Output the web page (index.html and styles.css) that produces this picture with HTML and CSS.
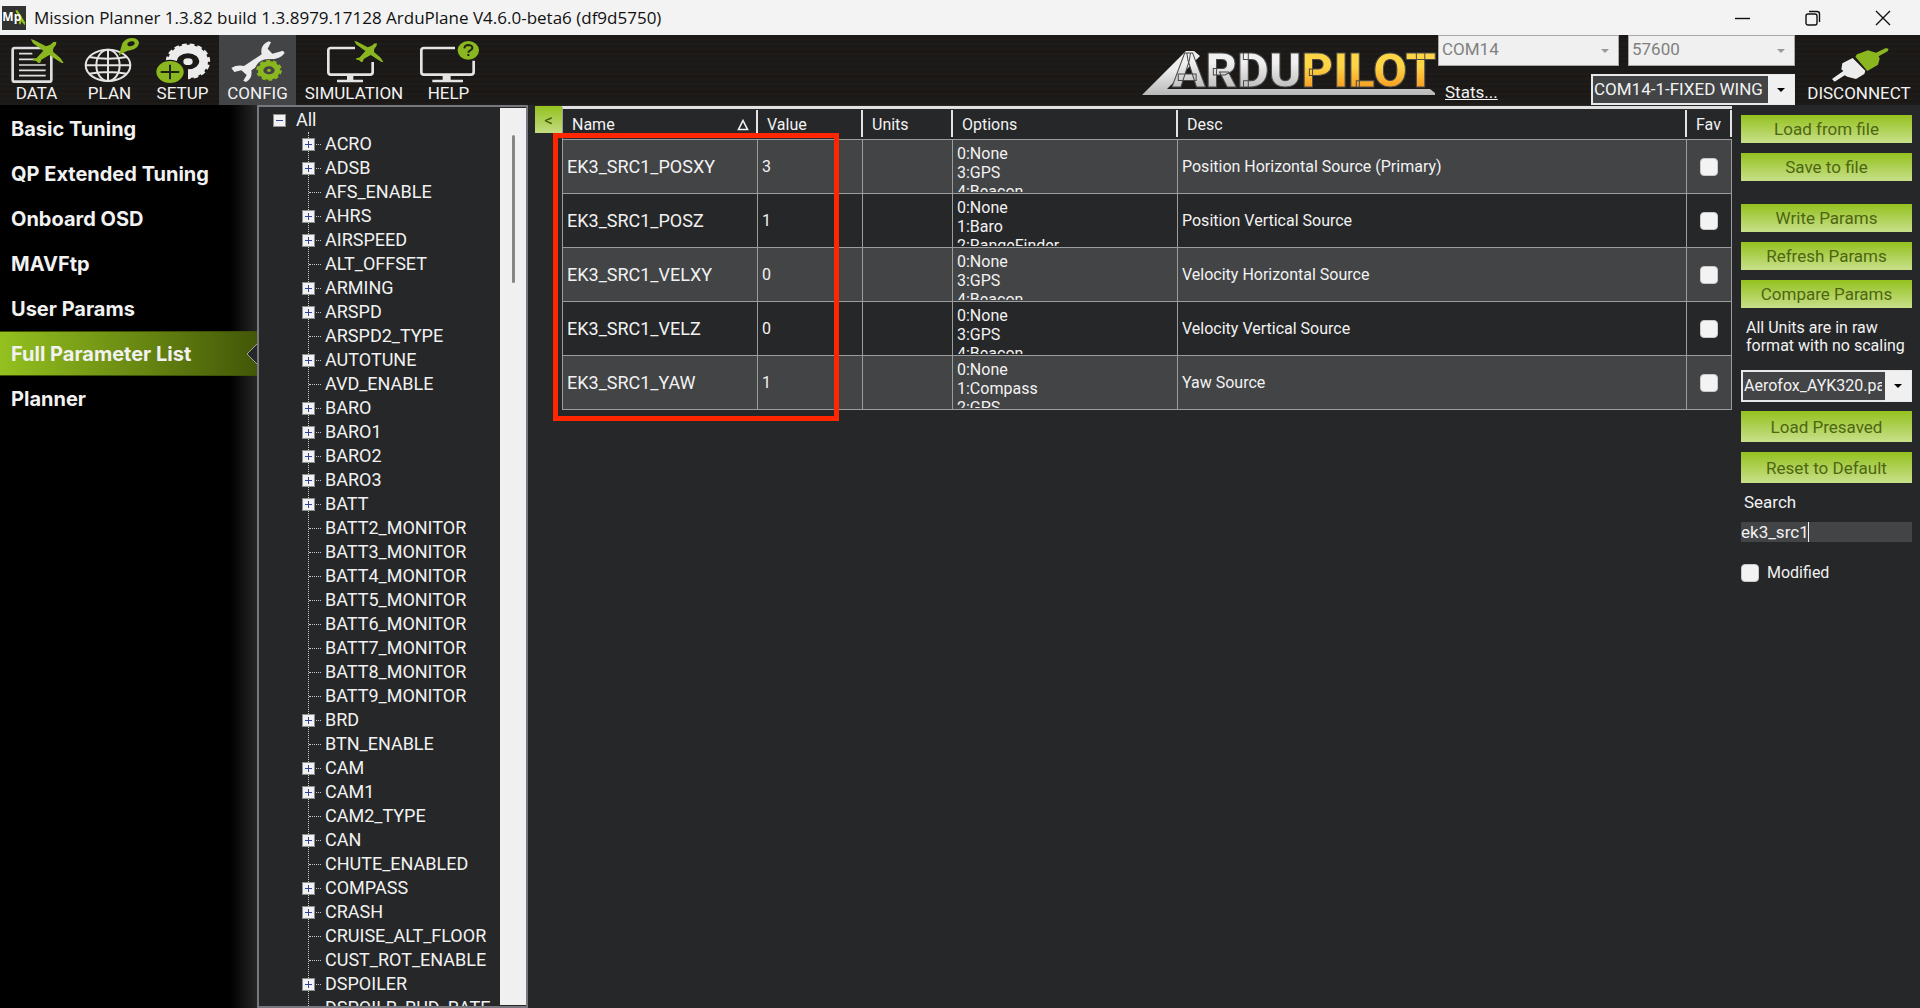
FILE: index.html
```html
<!DOCTYPE html>
<html lang="en">
<head>
<meta charset="utf-8">
<title>Mission Planner</title>
<link rel="stylesheet" href="styles.css">
</head>
<body>
<svg class="defs" aria-hidden="true">
  <defs>
    <symbol id="plane" viewBox="0 0 102 74">
      <path d="M2 0 L12 3 48 22 61 17 70 9 79 8 78 17 70 28 69 38 91 57 101 72 95 72 58 48 34 62 31 71 25 72 19 66 8 64 9 59 20 57 40 35 9 13Z"/>
    </symbol>
    <linearGradient id="silver" x1="0" y1="0" x2="0" y2="1">
      <stop offset="0.4" stop-color="#eeeeee"/><stop offset="1" stop-color="#b8b8b8"/>
    </linearGradient>
    <linearGradient id="gold" gradientUnits="userSpaceOnUse" x1="0" y1="16" x2="0" y2="54">
      <stop offset="0.4" stop-color="#fdd545"/><stop offset="1" stop-color="#f79a20"/>
    </linearGradient>
    <linearGradient id="steel" gradientUnits="userSpaceOnUse" x1="0" y1="16" x2="0" y2="54">
      <stop offset="0.3" stop-color="#f0f0f0"/><stop offset="1" stop-color="#bcbcbc"/>
    </linearGradient>
  </defs>
</svg>

<header class="titlebar">
  <svg class="app-icon" viewBox="0 0 72 72" aria-hidden="true">
    <rect width="72" height="72" fill="#30332f"/>
    <path d="M40 14 L46 12 70 50 68 58 58 46 56 56 50 52 54 40Z" fill="#8fc31f"/>
    <text x="1" y="46" class="app-icon-text">Mp</text>
  </svg>
  <h1 class="title">Mission Planner 1.3.82 build 1.3.8979.17128 ArduPlane V4.6.0-beta6 (df9d5750)</h1>
  <div class="window-buttons">
    <button type="button" aria-label="Minimize"><svg viewBox="0 0 16 16"><path d="M0 8.500H15"/></svg></button>
    <button type="button" aria-label="Restore"><svg viewBox="0 0 16 16"><rect x="1" y="4" width="11" height="11" rx="2"/><path d="M4 1.500H12Q14.500 1.500 14.500 4V12"/></svg></button>
    <button type="button" aria-label="Close"><svg viewBox="0 0 16 16"><path d="M1 1L15 15M15 1L1 15"/></svg></button>
  </div>
</header>

<div class="toolbar">
  <nav class="menu" aria-label="Main">
    <button type="button" class="tool">
      <svg viewBox="18 114 180 135"><rect x="35" y="144" width="116" height="101" rx="6" fill="none" stroke="#dedede" stroke-width="8"/>
        <path d="M54 161H94M54 178H100M54 195H134M54 211H134M54 227H134" stroke="#dedede" stroke-width="5"/>
        <use href="#plane" x="87" y="117" width="102" height="74" fill="#8ab71f"/></svg>
      <span>DATA</span></button>
    <button type="button" class="tool">
      <svg viewBox="237 114 180 135"><g fill="none" stroke="#e4e4e4" stroke-width="6"><ellipse cx="321" cy="196" rx="67" ry="47"/><ellipse cx="321" cy="196" rx="35" ry="47"/><path d="M321 149V243M254 196H388M264 171Q321 181 378 171M264 221Q321 211 378 221"/></g>
        <path fill="#8ab71f" fill-rule="evenodd" d="M353 167L364 130Q374 114 395 114Q414 116 414 130Q411 146 388 151Q373 153 353 167ZM391 124Q379 126 379 134Q381 140 391 138Q402 135 401 128Q398 123 391 124Z"/></svg>
      <span>PLAN</span></button>
    <button type="button" class="tool">
      <svg viewBox="459 114 180 135"><path d="M517 184A47 37 0 1 1 564 221" fill="none" stroke="#ececec" stroke-width="26"/>
        <path d="M502 184A62 49 0 1 1 564 233" fill="none" stroke="#ececec" stroke-width="9" stroke-dasharray="14 9"/>
        <ellipse cx="564" cy="185" rx="14" ry="10" fill="#ececec"/>
        <ellipse cx="510" cy="216" rx="45" ry="37" fill="#1b1917"/>
        <ellipse cx="510" cy="216" rx="41" ry="33" fill="#8ab71f"/><path d="M482 216H538M510 194V238" stroke="#1d2410" stroke-width="6"/></svg>
      <span>SETUP</span></button>
    <button type="button" class="tool selected">
      <svg viewBox="684 114 180 135"><path fill="#ececec" d="M694 204Q710 194 732 198L785 163Q779 135 806 124L813 127 803 146 817 161 849 152 854 159Q840 180 803 178L754 211Q758 236 738 246L730 242 740 225 724 211 703 216Z"/>
        <ellipse cx="807" cy="211" rx="42" ry="34" fill="#434446"/>
        <ellipse cx="807" cy="211" rx="25" ry="20" fill="none" stroke="#8ab71f" stroke-width="16"/><ellipse cx="807" cy="211" rx="35" ry="28" fill="none" stroke="#8ab71f" stroke-width="7" stroke-dasharray="11 9"/><ellipse cx="807" cy="211" rx="6" ry="5" fill="#8ab71f"/></svg>
      <span>CONFIG</span></button>
    <button type="button" class="tool tool-wide">
      <svg viewBox="327 114 180 135"><path d="M420 144H348Q340 144 340 151V217Q340 224 348 224H465Q473 224 473 217V186" fill="none" stroke="#e4e4e4" stroke-width="8"/><path d="M396 225H415V239H444V247H366V239H396Z" fill="#e4e4e4"/>
        <use href="#plane" x="416" y="117" width="90" height="76" fill="#8ab71f"/></svg>
      <span>SIMULATION</span></button>
    <button type="button" class="tool">
      <svg viewBox="610 114 180 135"><path d="M718 144H625Q617 144 617 151V217Q617 224 625 224H765Q774 224 774 217V182" fill="none" stroke="#e4e4e4" stroke-width="8"/><path d="M681 225H705V239H742V247H650V239H681Z" fill="#e4e4e4"/>
        <ellipse cx="758" cy="151" rx="32" ry="28" fill="#8ab71f"/><path d="M746 145Q747 135 759 135Q771 136 770 145Q769 149 764 151Q758 154 758 158M758 162V168" fill="none" stroke="#1d2410" stroke-width="6"/></svg>
      <span>HELP</span></button>
  </nav>
  <svg class="logo" viewBox="0 0 296 70" role="img" aria-label="ArduPilot">
    <path d="M2 60L46 16H54L60 21 27 54H290L295 58V60Z" fill="url(#silver)"/>
    <text x="32" y="52" class="logo-text"><tspan fill="url(#steel)">ARDU</tspan><tspan fill="url(#gold)">PILOT</tspan></text>
  </svg>
  <div class="connection">
    <div class="connection-row">
      <span class="combo combo-port"><select disabled aria-label="Port"><option>COM14</option></select><i></i></span>
      <span class="combo combo-baud"><select disabled aria-label="Baud rate"><option>57600</option></select><i></i></span>
    </div>
    <div class="connection-row">
      <a class="stats" href="#stats">Stats...</a>
      <span class="combo combo-dark combo-vehicle"><select aria-label="Vehicle"><option>COM14-1-FIXED WING</option></select><i></i></span>
    </div>
  </div>
  <button type="button" class="tool tool-connect">
    <svg viewBox="1197 114 180 135"><path fill="#ececec" d="M1206 237L1240 213 1234 208 1237 190 1268 174 1306 212 1303 222 1278 237 1252 230 1244 226 1214 245Z"/>
      <path fill="#8ab71f" d="M1276 170L1281 163 1314 151 1338 158 1368 144 1376 147 1373 154 1346 169 1349 176 1344 194 1312 213Z"/></svg>
    <span>DISCONNECT</span></button>
</div>

<div class="workspace">
  <nav class="sidebar" aria-label="Config pages">
    <a href="#basic">Basic Tuning</a>
    <a href="#qp">QP Extended Tuning</a>
    <a href="#osd">Onboard OSD</a>
    <a href="#mavftp">MAVFtp</a>
    <a href="#user">User Params</a>
    <a href="#full" class="current">Full Parameter List<svg class="notch" viewBox="0 0 11 20" aria-hidden="true"><path d="M11 0L1 10L11 20" fill="#262729" stroke="#a0a0a0"/></svg></a>
    <a href="#planner">Planner</a>
  </nav>

  <section class="tree-panel" aria-label="Parameter groups">
    <div class="tree">
      <div class="root"><button type="button" class="box minus" aria-label="Collapse"></button><span>All</span></div>
      <ul id="groups">
        <li class="group"><button type="button" class="box" aria-label="Expand"></button><span>ACRO</span></li>
        <li class="group"><button type="button" class="box" aria-label="Expand"></button><span>ADSB</span></li>
        <li><span>AFS_ENABLE</span></li>
        <li class="group"><button type="button" class="box" aria-label="Expand"></button><span>AHRS</span></li>
        <li class="group"><button type="button" class="box" aria-label="Expand"></button><span>AIRSPEED</span></li>
        <li><span>ALT_OFFSET</span></li>
        <li class="group"><button type="button" class="box" aria-label="Expand"></button><span>ARMING</span></li>
        <li class="group"><button type="button" class="box" aria-label="Expand"></button><span>ARSPD</span></li>
        <li><span>ARSPD2_TYPE</span></li>
        <li class="group"><button type="button" class="box" aria-label="Expand"></button><span>AUTOTUNE</span></li>
        <li><span>AVD_ENABLE</span></li>
        <li class="group"><button type="button" class="box" aria-label="Expand"></button><span>BARO</span></li>
        <li class="group"><button type="button" class="box" aria-label="Expand"></button><span>BARO1</span></li>
        <li class="group"><button type="button" class="box" aria-label="Expand"></button><span>BARO2</span></li>
        <li class="group"><button type="button" class="box" aria-label="Expand"></button><span>BARO3</span></li>
        <li class="group"><button type="button" class="box" aria-label="Expand"></button><span>BATT</span></li>
        <li><span>BATT2_MONITOR</span></li>
        <li><span>BATT3_MONITOR</span></li>
        <li><span>BATT4_MONITOR</span></li>
        <li><span>BATT5_MONITOR</span></li>
        <li><span>BATT6_MONITOR</span></li>
        <li><span>BATT7_MONITOR</span></li>
        <li><span>BATT8_MONITOR</span></li>
        <li><span>BATT9_MONITOR</span></li>
        <li class="group"><button type="button" class="box" aria-label="Expand"></button><span>BRD</span></li>
        <li><span>BTN_ENABLE</span></li>
        <li class="group"><button type="button" class="box" aria-label="Expand"></button><span>CAM</span></li>
        <li class="group"><button type="button" class="box" aria-label="Expand"></button><span>CAM1</span></li>
        <li><span>CAM2_TYPE</span></li>
        <li class="group"><button type="button" class="box" aria-label="Expand"></button><span>CAN</span></li>
        <li><span>CHUTE_ENABLED</span></li>
        <li class="group"><button type="button" class="box" aria-label="Expand"></button><span>COMPASS</span></li>
        <li class="group"><button type="button" class="box" aria-label="Expand"></button><span>CRASH</span></li>
        <li><span>CRUISE_ALT_FLOOR</span></li>
        <li><span>CUST_ROT_ENABLE</span></li>
        <li class="group"><button type="button" class="box" aria-label="Expand"></button><span>DSPOILER</span></li>
        <li><span>DSPOILR_RUD_RATE</span></li>
      </ul>
    </div>
    <div class="scrollbar"><div class="thumb"></div></div>
  </section>

  <main class="params">
    <button type="button" class="collapse">&lt;</button>
    <div class="grid-area">
      <table>
        <colgroup><col class="c-name"><col class="c-value"><col class="c-units"><col class="c-options"><col><col class="c-fav"></colgroup>
        <thead>
          <tr><th><div>Name<svg class="sort" viewBox="0 0 12 12" aria-label="ascending"><path d="M6 1.500L10.500 10.500H1.500Z"/></svg></div></th><th><div>Value</div></th><th><div>Units</div></th><th><div>Options</div></th><th><div>Desc</div></th><th><div>Fav</div></th></tr>
        </thead>
        <tbody>
          <tr><td class="name">EK3_SRC1_POSXY</td><td>3</td><td></td><td><div class="options">0:None<br>3:GPS<br>4:Beacon</div></td><td>Position Horizontal Source (Primary)</td><td><input type="checkbox" aria-label="Favourite EK3_SRC1_POSXY"></td></tr>
          <tr><td class="name">EK3_SRC1_POSZ</td><td>1</td><td></td><td><div class="options">0:None<br>1:Baro<br>2:RangeFinder</div></td><td>Position Vertical Source</td><td><input type="checkbox" aria-label="Favourite EK3_SRC1_POSZ"></td></tr>
          <tr><td class="name">EK3_SRC1_VELXY</td><td>0</td><td></td><td><div class="options">0:None<br>3:GPS<br>4:Beacon</div></td><td>Velocity Horizontal Source</td><td><input type="checkbox" aria-label="Favourite EK3_SRC1_VELXY"></td></tr>
          <tr><td class="name">EK3_SRC1_VELZ</td><td>0</td><td></td><td><div class="options">0:None<br>3:GPS<br>4:Beacon</div></td><td>Velocity Vertical Source</td><td><input type="checkbox" aria-label="Favourite EK3_SRC1_VELZ"></td></tr>
          <tr><td class="name">EK3_SRC1_YAW</td><td>1</td><td></td><td><div class="options">0:None<br>1:Compass<br>2:GPS</div></td><td>Yaw Source</td><td><input type="checkbox" aria-label="Favourite EK3_SRC1_YAW"></td></tr>
        </tbody>
      </table>
      <div class="highlight"></div>
    </div>
  </main>

  <aside class="actions">
    <div class="stack">
      <button type="button" class="green">Load from file</button>
      <button type="button" class="green">Save to file</button>
    </div>
    <div class="stack">
      <button type="button" class="green">Write Params</button>
      <button type="button" class="green">Refresh Params</button>
      <button type="button" class="green">Compare Params</button>
    </div>
    <p class="note">All Units are in raw<br>format with no scaling</p>
    <span class="combo combo-dark combo-preset"><select aria-label="Presaved parameters"><option>Aerofox_AYK320.param</option></select><i></i></span>
    <div class="stack presets">
      <button type="button" class="green tall">Load Presaved</button>
      <button type="button" class="green tall">Reset to Default</button>
    </div>
    <label class="search-label" for="search">Search</label>
    <div class="search"><input id="search" type="text" value="ek3_src1"><span class="caret"></span></div>
    <label class="modified"><input type="checkbox">Modified</label>
  </aside>
</div>
</body>
</html>
```
FILE: styles.css
```css
* { box-sizing: border-box; }

body {
  margin: 0;
  height: 100vh;
  display: flex;
  flex-direction: column;
  overflow: hidden;
  background: #262729;
  color: #f2f2f2;
  font: 17px/20px Roboto, "Liberation Sans", sans-serif;
}

button, select, input { font: inherit; color: inherit; margin: 0; }
button { padding: 0; border: 0; background: none; }
svg { display: block; }
.defs { position: absolute; width: 0; height: 0; }

/* Title bar */
.titlebar {
  flex: none;
  height: 35px;
  display: flex;
  align-items: center;
  background: #f3f3f3;
  color: #111;
}
.app-icon { width: 24px; height: 24px; margin: 0 8px 0 2px; }
.app-icon-text { font: bold 36px "Open Sans", sans-serif; fill: #fff; }
.title { margin: 0; flex: 1; font: 17px/24px "Open Sans", "Noto Sans", sans-serif; }
.window-buttons { display: flex; margin-right: 2px; }
.window-buttons button { width: 70px; height: 33px; display: grid; place-items: center; }
.window-buttons svg { width: 16px; height: 16px; fill: none; stroke: #111; stroke-width: 1.4; }

/* Toolbar */
.toolbar {
  flex: none;
  height: 70px;
  display: flex;
  background: repeating-linear-gradient(#1b1917 0 3px, #1e1b19 3px 5px);
}
.menu { display: flex; flex: 1; }
.tool {
  width: 73px;
  display: flex;
  flex-direction: column;
  align-items: center;
  padding-top: 3px;
}
.tool svg { width: 60px; height: 45px; }
.tool.selected { width: 77px; background: #434446; }
.tool-wide { width: 116px; }
.tool-connect { width: 122px; }
.logo { width: 296px; height: 70px; margin-right: 2px; }
.logo-text { font: 900 49px Roboto, sans-serif; stroke: #4a4a4a; stroke-width: 1; }
.connection {
  width: 357px;
  margin-right: 3px;
  display: flex;
  flex-direction: column;
  justify-content: space-between;
}
.connection-row { display: flex; justify-content: space-between; align-items: flex-end; }
.stats { color: #f2f2f2; margin: 0 0 3px 7px; }

.combo { display: grid; height: 31px; }
.combo select, .combo i { grid-area: 1 / 1; }
.combo select {
  appearance: none;
  width: 100%;
  min-width: 0;
  padding: 0 28px 3px 3px;
  border: 1px solid #a9a9a9;
  border-radius: 0;
  background: #f0f0f0;
  color: #808080;
  opacity: 1;
  overflow: hidden;
}
.combo i {
  justify-self: end;
  width: 26px;
  margin: 1px;
  display: grid;
  place-items: center;
  background: #f0f0f0;
  pointer-events: none;
}
.combo i::after {
  content: "";
  border: 4px solid transparent;
  border-top-color: #9a9a9a;
  border-bottom: 0;
}
.combo-dark select { background: #434446; color: #f2f2f2; border: 2px solid #e8e8e8; padding: 0 28px 1px 1px; }
.combo-dark i::after { border-top-color: #000; }
.combo-port { width: 181px; }
.combo-baud { width: 167px; }
.combo-vehicle { width: 204px; }

/* Workspace */
.workspace { flex: 1; min-height: 0; display: flex; }

.sidebar {
  flex: none;
  width: 257px;
  padding-top: 1px;
  background: linear-gradient(90deg, #000 230px, #262626);
}
.sidebar a {
  display: flex;
  align-items: center;
  justify-content: space-between;
  height: 45px;
  padding-left: 11px;
  color: #f2f2f2;
  font: 700 20px/24px Inter, "Liberation Sans", sans-serif;
  text-decoration: none;
}
.sidebar a.current {
  background: linear-gradient(90deg, #94c11f, #435707);
  border-top: 1px solid #3e5206;
  border-bottom: 1px solid #3e5206;
}
.notch { width: 11px; height: 20px; }

.tree-panel {
  flex: none;
  width: 271px;
  display: flex;
  border: 2px solid #77777f;
  font-size: 18px;
}
.tree { flex: 1; overflow: hidden; padding-top: 1px; }
.root, .tree li { height: 24px; display: flex; align-items: center; white-space: nowrap; }
.root { padding-left: 14px; gap: 10px; }
.tree ul {
  list-style: none;
  margin: 0 0 0 49px;
  padding: 0;
  border-left: 1px dotted #c8c8c8;
}
.tree li::before { content: ""; width: 12px; margin-right: 4px; border-top: 1px dotted #c8c8c8; }
.tree li.group::before { order: 1; width: 5px; margin-left: 1px; }
.tree li span { order: 2; }
.tree li .box { margin-left: -7px; }
.box {
  flex: none;
  width: 13px;
  height: 13px;
  border: 1px solid #8e8e8e;
  background:
    linear-gradient(#31479a, #31479a) center / 7px 1px no-repeat,
    linear-gradient(#31479a, #31479a) center / 1px 7px no-repeat,
    #f2f2f2;
}
.box.minus { background: linear-gradient(#31479a, #31479a) center / 7px 1px no-repeat, #f2f2f2; }
.scrollbar { flex: none; width: 26px; padding: 27px 0 0 12px; background: #f0f0f0; margin: 1px 0; }
.thumb { width: 3px; height: 148px; background: #868686; border-radius: 2px; }

/* Parameter table */
.params { flex: 1; min-width: 0; display: flex; align-items: flex-start; padding: 1px 0 0 7px; }
.collapse {
  width: 27px;
  height: 27px;
  background: linear-gradient(#94c11f, #c3dc82);
  color: #46600c;
}
.grid-area { flex: 1; min-width: 0; position: relative; }
table {
  width: 100%;
  table-layout: fixed;
  border-spacing: 0;
  border-top: 3px solid #e0e0e0;
  border-left: 1px solid #9c9c9c;
}
.c-name { width: 195px; }
.c-value { width: 105px; }
.c-units { width: 90px; }
.c-options { width: 225px; }
.c-fav { width: 45px; }
th { padding: 1px 0 2px; height: 31px; font-weight: 400; font-size: 16px; text-align: left; border-bottom: 1px solid #9c9c9c; }
th div {
  height: 27px;
  padding: 2px 7px 0 9px;
  display: flex;
  align-items: center;
  justify-content: space-between;
  border-right: 2px solid #e4e4e4;
}
.sort { width: 12px; height: 12px; fill: none; stroke: #f2f2f2; stroke-width: 1.6; }
td {
  height: 54px;
  padding: 0 4px;
  font-size: 16px;
  border-right: 1px solid #9c9c9c;
  border-bottom: 1px solid #9c9c9c;
}
td.name { font-size: 18px; }
tbody tr:nth-child(odd) { background: #434446; }
.options { height: 50px; padding-top: 2px; line-height: 19px; overflow: hidden; }
input[type="checkbox"] {
  appearance: none;
  display: block;
  width: 18px;
  height: 18px;
  border: 1px solid #c9c9c9;
  border-radius: 4px;
  background: #f3f3f3;
}
td input[type="checkbox"] { margin: 0 auto; }
.highlight {
  position: absolute;
  inset: 27px auto auto -9px;
  width: 286px;
  height: 288px;
  border: 5px solid #ff2600;
}

/* Action column */
.actions {
  flex: none;
  width: 188px;
  padding: 10px 8px 0 9px;
  display: flex;
  flex-direction: column;
}
.stack { display: flex; flex-direction: column; gap: 10px; margin-bottom: 23px; }
.green {
  height: 28px;
  background: linear-gradient(#94c11f, #c8e08a);
  color: #4d6612;
}
.green.tall { height: 31px; }
.note { margin: -12px 0 15px 5px; font-size: 16px; line-height: 18px; white-space: nowrap; }
.combo-preset { height: 32px; margin-bottom: 9px; font-size: 16px; }
.presets { margin-bottom: 9px; }
.search-label { padding-left: 3px; }
.search { position: relative; margin: 10px 0 21px; }
.search input {
  display: block;
  width: 100%;
  height: 20px;
  padding: 0;
  border: 0;
  background: #434446;
}
.caret { position: absolute; left: 67px; top: 0; width: 1px; height: 20px; background: #f2f2f2; }
.modified { display: flex; align-items: center; gap: 8px; font-size: 16px; }
```
